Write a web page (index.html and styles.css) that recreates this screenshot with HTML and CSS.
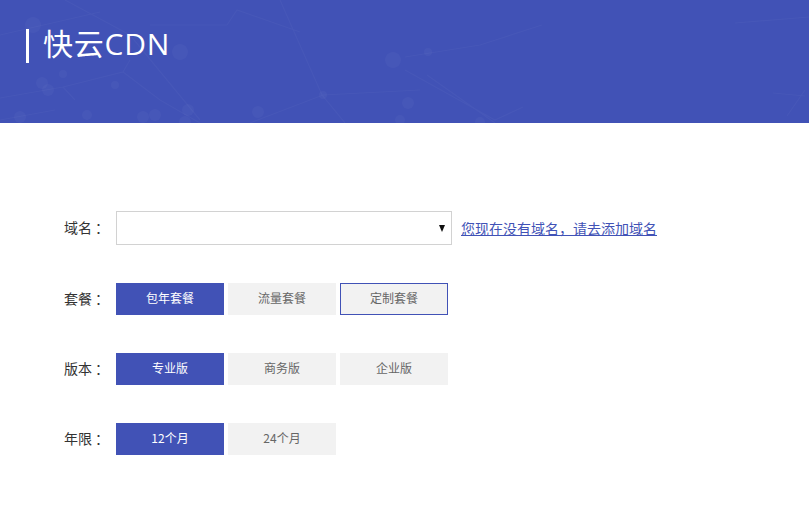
FILE: index.html
```html
<!DOCTYPE html>
<html lang="zh">
<head>
<meta charset="utf-8">
<title>快云CDN</title>
<link rel="stylesheet" href="styles.css">
</head>
<body>
<header class="banner">
  <svg class="banner-art" viewBox="0 0 809 123" width="809" height="123" aria-hidden="true">
    <g class="art-lines">
      <path d="M0 98L63 87 123 72 160 100 200 123 M63 87L75 100 M150 25L227 25 237 10 300 32 M123 72L130 60 M0 35L100 12 M65 0L130 35 200 120 M280 0L322 95 345 123 M405 57L480 45 542 25 M405 70L495 120 523 107 M427 75L495 123 M735 23L809 17 M773 93L805 96 M787 116L805 90 M250 123L323 95 420 90 M0 120L55 110" />
    </g>
    <g class="art-dots">
      <circle cx="33" cy="25" r="8"/><circle cx="180" cy="52" r="8"/><circle cx="393" cy="60" r="8"/>
      <circle cx="42" cy="83" r="6"/><circle cx="48" cy="90" r="6"/><circle cx="63" cy="74" r="4"/><circle cx="115" cy="85" r="4"/>
      <circle cx="20" cy="117" r="6"/><circle cx="87" cy="115" r="5"/><circle cx="143" cy="117" r="6"/><circle cx="155" cy="115" r="6"/><circle cx="188" cy="110" r="6"/><circle cx="185" cy="122" r="6"/>
      <circle cx="258" cy="112" r="6"/><circle cx="323" cy="95" r="4"/><circle cx="400" cy="120" r="5"/><circle cx="408" cy="103" r="6"/><circle cx="428" cy="52" r="4"/><circle cx="480" cy="122" r="5"/>
    </g>
  </svg>
  <h1 class="brand">快云CDN</h1>
</header>
<main class="order-form">
  <div class="row row-domain">
    <span class="label">域名<span class="colon">：</span></span>
    <div class="select"><span class="caret"></span></div>
    <a class="add-link" href="#">您现在没有域名，请去添加域名</a>
  </div>
  <div class="row">
    <span class="label">套餐<span class="colon">：</span></span>
    <div class="options">
      <button class="opt active">包年套餐</button>
      <button class="opt">流量套餐</button>
      <button class="opt outlined">定制套餐</button>
    </div>
  </div>
  <div class="row">
    <span class="label">版本<span class="colon">：</span></span>
    <div class="options">
      <button class="opt active">专业版</button>
      <button class="opt">商务版</button>
      <button class="opt">企业版</button>
    </div>
  </div>
  <div class="row">
    <span class="label">年限<span class="colon">：</span></span>
    <div class="options">
      <button class="opt active">12个月</button>
      <button class="opt">24个月</button>
    </div>
  </div>
</main>
</body>
</html>
```
FILE: styles.css
```css
* { box-sizing: border-box; }
html, body { margin: 0; padding: 0; }
body {
  background: #fff;
  color: #333;
  font-family: "Noto Sans CJK SC", "Liberation Sans", sans-serif;
  overflow: hidden;
}
.banner {
  position: relative;
  height: 123px;
  background: #4152b6;
  padding: 29px 0 0 26px;
  overflow: hidden;
}
.banner-art { position: absolute; left: 0; top: 0; }
.art-lines { fill: none; stroke: #fff; stroke-opacity: 0.03; stroke-width: 1.2; }
.art-dots { fill: #fff; fill-opacity: 0.03; }
.brand {
  position: relative;
  margin: 0;
  height: 34px;
  border-left: 3px solid #fff;
  padding-left: 14px;
  color: #fff;
  font-family: "Open Sans", "Noto Sans CJK SC", sans-serif;
  font-size: 30px;
  font-weight: 400;
  letter-spacing: 0.8px;
  line-height: 30px;
}
.order-form {
  padding: 88px 0 0 64px;
  display: flex;
  flex-direction: column;
  gap: 38px;
}
.row { display: flex; align-items: center; height: 32px; }
.row-domain { height: 34px; }
.label {
  width: 52px;
  margin-top: -2px;
  font-size: 14px;
  line-height: 20px;
  color: #333;
  flex: none;
  white-space: nowrap;
}
.colon { padding-left: 3px; }
.select {
  position: relative;
  width: 336px;
  height: 34px;
  border: 1px solid #d2d2d2;
  background: #fff;
  flex: none;
}
.caret {
  position: absolute;
  right: 6px;
  top: 13px;
  border-left: 3.5px solid transparent;
  border-right: 3.5px solid transparent;
  border-top: 7px solid #111;
}
.add-link {
  margin-left: 9px;
  color: #4152b6;
  font-size: 14px;
  line-height: 20px;
  text-decoration: underline;
}
.options { display: flex; gap: 4px; }
.opt {
  width: 108px;
  height: 32px;
  padding: 0 0 2px;
  border: 0;
  background: #f2f2f2;
  color: #666;
  font-family: inherit;
  font-size: 12px;
  line-height: 20px;
}
.opt.active { background: #4152b6; color: #fff; }
.opt.outlined { border: 1px solid #4152b6; }
```
